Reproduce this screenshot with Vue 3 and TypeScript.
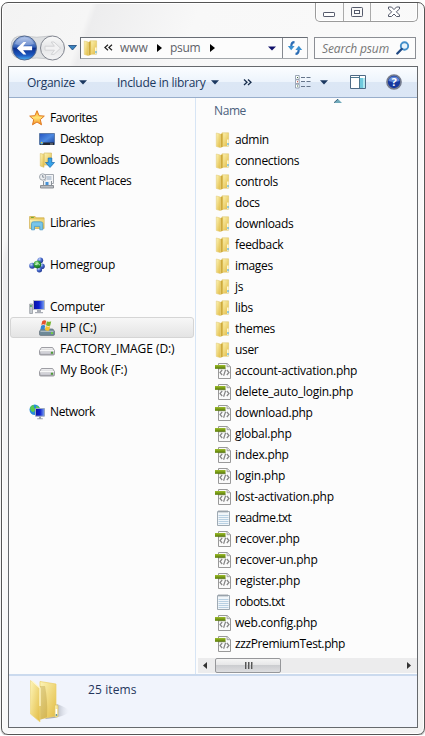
<script setup lang="ts">
interface NavItem {
  label: string
  icon: string
  level: number
  fit: 'tight' | 'normal' | 'loose'
  gap?: boolean
  selected?: boolean
}
interface FileItem {
  name: string
  icon: string
}

const navItems: NavItem[] = [
  { label: 'Favorites', icon: 'star', level: 0, fit: 'tight' },
  { label: 'Desktop', icon: 'desktop', level: 1, fit: 'tight' },
  { label: 'Downloads', icon: 'downloads', level: 1, fit: 'tight' },
  { label: 'Recent Places', icon: 'recent', level: 1, fit: 'tight' },
  { label: 'Libraries', icon: 'libraries', level: 0, fit: 'tight', gap: true },
  { label: 'Homegroup', icon: 'homegroup', level: 0, fit: 'normal', gap: true },
  { label: 'Computer', icon: 'computer', level: 0, fit: 'normal', gap: true },
  { label: 'HP (C:)', icon: 'system-drive', level: 1, fit: 'loose', selected: true },
  { label: 'FACTORY_IMAGE (D:)', icon: 'drive', level: 1, fit: 'loose' },
  { label: 'My Book (F:)', icon: 'drive', level: 1, fit: 'loose' },
  { label: 'Network', icon: 'network', level: 0, fit: 'tight', gap: true },
]

const names: string[] = [
  'admin', 'connections', 'controls', 'docs', 'downloads', 'feedback', 'images', 'js', 'libs', 'themes', 'user',
  'account-activation.php', 'delete_auto_login.php', 'download.php', 'global.php', 'index.php', 'login.php',
  'lost-activation.php', 'readme.txt', 'recover.php', 'recover-un.php', 'register.php', 'robots.txt',
  'web.config.php', 'zzzPremiumTest.php',
]
const files: FileItem[] = names.map((name) => ({
  name,
  icon: name.endsWith('.php') ? 'php' : name.endsWith('.txt') ? 'txt' : 'folder',
}))
</script>

<template>
  <svg class="defs" width="0" height="0" aria-hidden="true">
    <defs>
      <linearGradient id="g-yellow" x1="0" x2="1" y1="0" y2="1">
        <stop offset="0" stop-color="#fdf5b8" /><stop offset="1" stop-color="#e2bb42" />
      </linearGradient>
      <linearGradient id="g-fold" x1="0" x2="1" y1="0" y2="0">
        <stop offset="0" stop-color="#e8cd6b" /><stop offset=".5" stop-color="#c9a435" /><stop offset="1" stop-color="#e8cd6b" />
      </linearGradient>
      <linearGradient id="g-star" x1="0" x2="0" y1="0" y2="1">
        <stop offset="0" stop-color="#ffa51c" /><stop offset=".5" stop-color="#ffe477" /><stop offset="1" stop-color="#f58c1b" />
      </linearGradient>
      <linearGradient id="g-screen" x1="0" x2="1" y1="0" y2="1">
        <stop offset="0" stop-color="#2555c2" /><stop offset=".5" stop-color="#4d89e0" /><stop offset="1" stop-color="#173f9b" />
      </linearGradient>
      <linearGradient id="g-monitor" x1="0" x2="1" y1="0" y2="0">
        <stop offset="0" stop-color="#0a12a0" /><stop offset=".5" stop-color="#0d20d0" /><stop offset="1" stop-color="#7fa8f0" />
      </linearGradient>
      <linearGradient id="g-metal" x1="0" x2="0" y1="0" y2="1">
        <stop offset="0" stop-color="#f7f7f8" /><stop offset="1" stop-color="#a7a7ad" />
      </linearGradient>
      <radialGradient id="g-ball" cx=".35" cy=".3" r=".75">
        <stop offset="0" stop-color="#c7d8fa" /><stop offset=".5" stop-color="#4467c9" /><stop offset="1" stop-color="#21368f" />
      </radialGradient>
      <radialGradient id="g-green" cx=".4" cy=".3" r=".7">
        <stop offset="0" stop-color="#b9efae" /><stop offset=".5" stop-color="#2f9f37" /><stop offset="1" stop-color="#16651f" />
      </radialGradient>
      <linearGradient id="g-back" x1="0" x2="0" y1="0" y2="1">
        <stop offset="0" stop-color="#a9bfe8" /><stop offset=".45" stop-color="#3461b9" /><stop offset=".52" stop-color="#0d3190" /><stop offset=".8" stop-color="#1c58c0" /><stop offset="1" stop-color="#4bb3f2" />
      </linearGradient>
      <linearGradient id="g-next" x1="0" x2="0" y1="0" y2="1">
        <stop offset="0" stop-color="#fafafa" /><stop offset=".5" stop-color="#e4e5e7" /><stop offset="1" stop-color="#f5f5f6" />
      </linearGradient>
      <linearGradient id="g-tag" x1="0" x2="0" y1="0" y2="1">
        <stop offset="0" stop-color="#9cbc2c" /><stop offset="1" stop-color="#587b04" />
      </linearGradient>

      <symbol id="folder" viewBox="0 0 16 16">
        <path d="M7 .8h6.6v13.4H7z" fill="url(#g-yellow)" stroke="#ddc56b" stroke-width=".6" />
        <path d="M1.3 1 5.2 2v13.6l-3.9-1.2z" fill="url(#g-yellow)" stroke="#e4cd79" stroke-width=".6" />
        <path d="M5.2 2 8.2 1.2v13.5l-3 1.1z" fill="url(#g-fold)" />
        <path d="M12 7.5h1.6V14H12z" fill="#fff8d7" /><path d="M12.4 11h1.2v2.2h-1.2z" fill="#55aee3" />
      </symbol>
      <symbol id="star" viewBox="0 0 16 16">
        <path d="m8 .7 2.1 5 5.2.4-4 3.5 1.2 5.2L8 12l-4.5 2.8 1.2-5.2-4-3.5 5.2-.4z" fill="url(#g-star)" stroke="#e07a24" />
      </symbol>
      <symbol id="desktop" viewBox="0 0 16 16">
        <path d="M.5 2.5h15v11H.5z" fill="url(#g-screen)" stroke="#5f7ca8" />
        <path d="M1 11.5h14V14H1z" fill="#23272f" /><circle cx="2.7" cy="12" r="1.6" fill="#50a8e8" />
        <path d="M2 11h1.3v1.2H2z" fill="#f2c12c" /><path d="M11 12.5h3v1h-3z" fill="#88919d" />
      </symbol>
      <symbol id="downloads" viewBox="0 0 16 16">
        <path d="M5 1h7.5v12H5z" fill="url(#g-yellow)" stroke="#ceb45b" stroke-width=".6" />
        <path d="M1.3 1.5 5 2.3v13L1.3 14z" fill="url(#g-yellow)" stroke="#d8bd62" stroke-width=".6" />
        <path d="M9.2 6h3.6v4.5h2.7L11 15.5l-4.5-5h2.7z" fill="#36a2e9" stroke="#1769ad" stroke-width=".7" />
      </symbol>
      <symbol id="recent" viewBox="0 0 16 16">
        <path d="M6 1.5h8.5v9H6z" fill="#f4f5f7" stroke="#a4a9b0" />
        <path d="M7.5 4h5M7.5 6h5" stroke="#91a6bd" /><path d="M4.5 8v4.5h8V8" fill="#eef1f4" stroke="#8b9299" /><path d="M6.5 9h3v3h-3z" fill="#4591d6" />
        <path d="M1.5 12.5h13v2.5h-13z" fill="#b9bdc2" stroke="#8b8f95" />
        <circle cx="3.7" cy="4" r="3.2" fill="#eceef0" stroke="#a2a8af" /><path d="M3.7 2v2.2h1.6" fill="none" stroke="#6c7785" stroke-width=".8" />
      </symbol>
      <symbol id="libraries" viewBox="0 0 16 16">
        <path d="M.6 1.5h5.5l1 1.3h8v10.7H.6z" fill="#e9c960" stroke="#cfad4d" stroke-width=".7" />
        <path d="M1 4.5h14v8.3H1z" fill="url(#g-yellow)" /><path d="M2 2.4h2.8" stroke="#6ba52d" />
        <path d="M2.5 14.8V8.5q0-1.7 2-1.7h7q2.3 0 2.3 1.7v6.3h-3v-3.4H5.5v3.4z" fill="#78c6ea" stroke="#4d9bc4" stroke-width=".8" />
      </symbol>
      <symbol id="homegroup" viewBox="0 0 16 16">
        <circle cx="11.3" cy="3.3" r="2.9" fill="url(#g-ball)" /><circle cx="3.2" cy="8.7" r="3" fill="url(#g-ball)" />
        <circle cx="13" cy="9.2" r="2.8" fill="url(#g-ball)" /><circle cx="10.4" cy="12.8" r="2.7" fill="url(#g-ball)" />
        <circle cx="8.4" cy="7.6" r="3.8" fill="url(#g-green)" /><path d="M5.8 7.5h2.4V5.7L11 8.2" fill="none" stroke="#c9f2c5" stroke-width=".8" />
      </symbol>
      <symbol id="computer" viewBox="0 0 16 16">
        <path d="M4.5 1.5h11v9h-11z" fill="url(#g-monitor)" stroke="#b6bac2" />
        <path d="M8 11h4v2H8zM6 13h8v1.3H6z" fill="#a9adb5" />
        <path d="M.7 5h2.8v9.5H.7z" fill="#c6cbd1" stroke="#898f97" stroke-width=".7" /><path d="M1.2 6h1.5v2H1.2z" fill="#45a04b" />
      </symbol>
      <symbol id="drive" viewBox="0 0 16 16">
        <path d="M2.4 6.5h11.2l1.9 3.2v3.1q0 1.2-1.2 1.2H1.7Q.5 14 .5 12.8V9.7z" fill="url(#g-metal)" stroke="#93939a" stroke-width=".9" />
        <path d="M1 9.7h14" stroke="#fff" /><path d="M2 11.2h9v1.4H2z" fill="#d6d6dd" /><path d="M12 10.8h2v2h-2z" fill="#4c9b37" />
      </symbol>
      <symbol id="system-drive" viewBox="0 0 16 16">
        <path d="M2.2 9h11.6l1.7 2.3v2.9q0 1.2-1.2 1.2H1.7q-1.2 0-1.2-1.2v-2.9z" fill="#6d8998" stroke="#6c7780" stroke-width=".8" />
        <path d="M1.5 11.3h13" stroke="#b8c6ce" /><path d="M12 12.3h2v1.7h-2z" fill="#70d23e" />
        <path d="M3.2 1.2q2-1.7 4-.4l-.9 4.1q-2-1.3-4 .1z" fill="#e4512b" /><path d="M7.9 1.3q2 1.1 4.3 0l-.9 4.1q-2.2 1.1-4.3-.1z" fill="#78b531" />
        <path d="M2.2 5.7q2-1.4 4-.1l-.8 4.1q-2-1.3-4.1.1z" fill="#3484d1" /><path d="M6.8 6q2.2 1.2 4.3.2l-.8 4q-2.2 1.1-4.3-.1z" fill="#f6c22e" />
      </symbol>
      <symbol id="network" viewBox="0 0 16 16">
        <circle cx="5.8" cy="5.8" r="5.3" fill="#278bda" /><path d="M1 4q1-3 4.2-3l-.5 2.3 2 2-2.2 3L2 7zM7 1.4l3.5 2-1.5 2-2-1z" fill="#5acb4c" />
        <path d="M6.5 4.5h9v7.7h-9z" fill="url(#g-monitor)" stroke="#9ba9bf" /><path d="M10 12.5h2v2h-2zM8.2 14.3h5.6v1H8.2z" fill="#9ba2ac" />
      </symbol>
      <symbol id="php" viewBox="0 0 16 16">
        <path d="M3.5.5h8.8l3.2 3.2v11.8h-12z" fill="#fafafa" stroke="#999" /><path d="M12 .5v3.2h3.5" fill="#ddd" stroke="#999" stroke-width=".8" />
        <path d="M7.2 7 5 9.5 7.2 12M11.8 7l2.2 2.5-2.2 2.5M10.6 6.8l-2 6" fill="none" stroke="#858585" stroke-width="1.2" />
        <path d="M0 2h10.5v3.8H0z" fill="url(#g-tag)" /><path d="M3.5 5.8h7" stroke="#5c6c35" stroke-width=".6" />
      </symbol>
      <symbol id="txt" viewBox="0 0 16 16">
        <path d="M2.5 1.5h12v14h-12z" fill="#f1f6fa" stroke="#9faab3" /><path d="M3.5 5.5h10M3.5 7.5h10M3.5 9.5h10M3.5 11.5h10M3.5 13.5h10" stroke="#b8d0e2" />
        <path d="M4 0v2.8M6 0v2.8M8 0v2.8M10 0v2.8M12 0v2.8" stroke="#8f979e" stroke-width=".8" />
      </symbol>
    </defs>
  </svg>

  <main class="window">
    <header class="caption">
      <div class="window-buttons">
        <span class="minimize"><svg width="13" height="6"><rect x=".5" y=".5" width="11" height="4" rx=".6" fill="#fff" stroke="#555a6b" /></svg></span>
        <span class="maximize"><svg width="13" height="12"><rect x=".5" y="1.5" width="11" height="9" rx=".8" fill="#f8f8f8" stroke="#555a6b" /><rect x="3.5" y="4.5" width="5" height="3" fill="#fff" stroke="#555a6b" /></svg></span>
        <span class="close"><svg width="14" height="12"><path d="M1.5 1h3L7 3.6 9.5 1h3v2L9.3 5.8 12.5 9v1.5h-3L7 8l-2.5 2.5h-3V9l3.2-3.2L1.5 3z" fill="#fff" stroke="#555a6b" /></svg></span>
      </div>
    </header>

    <nav class="navigation">
      <svg class="travel" width="70" height="28" viewBox="0 0 70 28">
        <path d="M13 2q14 2.5 27 0 9 0 12 10-3 10-12 13-13-2-27 0Q1 25 1 13T13 2" fill="#dddfe1" stroke="#b7babe" stroke-width=".7" />
        <circle cx="14.5" cy="14" r="12" fill="url(#g-back)" stroke="#52688e" /><path d="M4.8 10Q7.5 3.5 14.5 3.5T24 10q-10 3-19.2 0" fill="#fff" opacity=".25" />
        <path d="M6.8 14.2 13.5 8h2.8l-3.2 4.2h9v4h-9l3.2 4.2h-2.8z" fill="#fff" />
        <circle cx="42.5" cy="14" r="12" fill="url(#g-next)" stroke="#81858f" /><path d="M50.5 14.2 44 8h-2.8l3.2 4.2H35v4h9.4l-3.2 4.2H44z" fill="#f2f2f3" stroke="#d2d3d5" />
        <path d="M58.5 11.5h8l-4 4.5z" fill="#3982be" stroke="#1c487b" stroke-width=".8" />
      </svg>
      <div class="address">
        <svg class="folder-icon" width="16" height="16"><use href="#folder" /></svg>
        <span class="chevrons">
          <svg width="9" height="8"><path d="M4 .8.9 3.5 4 6.3M8 .8 4.9 3.5 8 6.3" fill="none" stroke="#222" stroke-width="1.2" /></svg>
        </span>
        <span class="crumb crumb-www">www</span>
        <svg class="crumb-arrow" width="5" height="8"><path d="M0 0l5 4-5 4z" fill="#000" /></svg>
        <span class="crumb crumb-psum">psum</span>
        <svg class="crumb-arrow last" width="5" height="8"><path d="M0 0l5 4-5 4z" fill="#000" /></svg>
        <svg class="history" width="8" height="5"><path d="M0 .5h8L4 4.6z" fill="#10106a" /></svg>
        <span class="refresh">
          <svg width="16" height="16" viewBox="0 0 16 16"><path d="M7.5 2.2Q4.3 2.2 4.3 6.5" fill="none" stroke="#2c6db5" stroke-width="2.2" /><path d="M.8 6h6.8l-3.4 4.2z" fill="#3a8fd0" /><path d="M8.5 13.8q3.2 0 3.2-4.3" fill="none" stroke="#2c6db5" stroke-width="2.2" /><path d="M8.4 10h6.8l-3.4-4.2z" fill="#3a8fd0" /></svg>
        </span>
      </div>
      <div class="search">
        <span>Search psum</span>
        <svg width="14" height="14" viewBox="0 0 14 14"><circle cx="8.5" cy="5" r="3.7" fill="#e8f4fc" stroke="#438fca" stroke-width="1.9" /><path d="m5.7 8-4.4 4.5" stroke="#214983" stroke-width="2.3" stroke-linecap="round" /></svg>
      </div>
    </nav>

    <section class="client">
      <div class="toolbar">
        <span class="organize">Organize</span>
        <svg class="organize-arrow" width="8" height="5"><path d="M0 .3h8L4 4.5z" fill="#1b3860" /></svg>
        <span class="include">Include in library</span>
        <svg class="include-arrow" width="8" height="5"><path d="M0 .3h8L4 4.5z" fill="#1b3860" /></svg>
        <svg class="more" width="9" height="7"><path d="M1 .5 4 3.2 1 6M5 .5 8 3.2 5 6" fill="none" stroke="#182d4c" stroke-width="1.3" /></svg>
        <svg class="view" width="16" height="14" viewBox="0 0 16 14">
          <path d="M.5.5h3.7v3.8H.5zM.5 4.8h3.7v3.8H.5zM.5 9.2h3.7V13H.5z" fill="#fff" stroke="#8492a5" stroke-width=".8" />
          <path d="M2 2h1v1H2zM2 10.6h1v1H2z" fill="#3c6c3e" /><path d="M2 6.3h1v1H2z" fill="#c63a2f" />
          <path d="M6 2.5h4m1.5 0h4M6 6.5h4m1.5 0h4M6 11.5h4m1.5 0h4" stroke="#65758b" />
        </svg>
        <svg class="view-arrow" width="8" height="5"><path d="M0 .3h8L4 4.5z" fill="#1b3860" /></svg>
        <svg class="preview" width="16" height="14"><path d="M.5.5h15v13H.5z" fill="#fff" stroke="#4d6985" /><path d="M10 3h5v10h-5z" fill="#70c9dd" /><path d="M1 2.5h9M9.5 1v12" stroke="#4d7891" /><path d="M13 3h2v10h-2z" fill="#aee8ef" /></svg>
        <svg class="help" width="16" height="16"><circle cx="8" cy="8" r="7" fill="#17389f" stroke="#747b8d" stroke-width="1.7" /><path d="M2.5 7Q3 2.5 8 2.5T13.5 7Q8 9 2.5 7" fill="#5f87d6" /><text x="8" y="12" text-anchor="middle">?</text></svg>
      </div>

      <div class="workspace">
        <aside class="sidebar">
          <div v-for="item in navItems" :key="item.label" class="nav-row" :class="[item.fit, { child: item.level === 1, gap: item.gap, selected: item.selected }]">
            <svg width="16" height="16"><use :href="'#' + item.icon" /></svg>
            <span>{{ item.label }}</span>
          </div>
        </aside>
        <section class="file-pane">
          <div class="column-head">
            <span>Name</span>
            <svg class="sort" width="8" height="4"><path d="M0 4l4-4 4 4z" fill="#70a9ba" /><path d="M0 3.7 4 0" stroke="#38617a" /></svg>
          </div>
          <div class="files">
            <div v-for="file in files" :key="file.name" class="file-row" :class="file.icon">
              <svg width="16" height="16"><use :href="'#' + file.icon" /></svg>
              <span>{{ file.name }}</span>
            </div>
          </div>
          <div class="scrollbar">
            <svg width="4" height="8"><path d="M4 0v7L0 3.5z" fill="#333" /></svg>
            <div class="thumb"><i /><i /><i /></div>
            <svg class="scroll-right" width="4" height="8"><path d="M0 0v7l4-3.5z" fill="#333" /></svg>
          </div>
        </section>
      </div>

      <footer class="details">
        <svg width="49" height="44" viewBox="0 0 49 44">
          <defs><linearGradient id="g-shadow" x1="0" x2="1" y1="0" y2="0"><stop offset=".4" stop-color="#8d92a0" /><stop offset="1" stop-color="#d5d9e4" stop-opacity="0" /></linearGradient></defs>
          <path d="M16 40q8 0 17-3 8-3 7-5-1-3-12-7z" fill="url(#g-shadow)" opacity=".75" />
          <path d="M11 2.5 27 5v32l-16 3z" fill="url(#g-yellow)" stroke="#eccf66" stroke-width=".7" />
          <path d="M11 7h5q3 16 2 31l-7 3z" fill="#9e7e23" opacity=".28" />
          <path d="m1.5 1.5 9.5 8V43l-9.5-8z" fill="url(#g-yellow)" stroke="#eed883" stroke-width=".7" />
          <path d="m3 2 8 7v18" fill="none" stroke="#fff7cc" stroke-width="1.3" /><rect x="25.5" y="26" width="3.5" height="12" rx="1" fill="#f8e89d" stroke="#d8ba54" stroke-width=".6" /><path d="M26.7 30h1.5v6h-1.5z" fill="#fff" /><path d="M26.7 35h1.5v2h-1.5z" fill="#6898a1" />
        </svg>
        <span>25 items</span>
      </footer>
    </section>
  </main>
</template>

<style>
body {
  margin: 0;
  overflow: hidden;
  background: #fff;
}
</style>

<style scoped>
* { box-sizing: border-box; }
svg { display: block; flex: none; }
.defs { position: absolute; }
.window {
  width: 424px;
  height: 733px;
  margin: 2px 0 0 1px;
  border: 1px solid #555;
  border-radius: 7px;
  padding: 0 6px;
  background: linear-gradient(110deg, #f3f3f3 0, #f6f6f6 13%, #ededee 14%, #f8f8f8 29%, #fafafa 70%, #f2f2f2 100%);
  box-shadow: inset 0 0 0 1px #fff, 0 1px 1px #999;
  font-family: 'Open Sans', 'Noto Sans', sans-serif;
  font-size: 12px;
  line-height: 21px;
  color: #000;
  white-space: nowrap;
}
.caption { display: flex; height: 31px; justify-content: flex-end; }
.window-buttons { display: flex; width: 103px; height: 19px; border: 1px solid #9b9b9b; border-top: 0; border-radius: 0 0 5px 5px; box-shadow: inset 0 0 0 1px #fff; }
.window-buttons span { display: flex; align-items: center; justify-content: center; width: 27px; border-right: 1px solid #aaa; }
.window-buttons .minimize { padding-top: 5px; width: 28px; }
.window-buttons .close { flex: 1; border: 0; }
.navigation { display: flex; height: 32px; padding-top: 3px; }
.travel { width: 70px; margin: -3px 0 0 2px; }
.address { display: flex; align-items: center; width: 228px; height: 22px; border: 1px solid #777c82; border-color: #686d75 #a3a7ab #a3a7ab #686d75; background: #fcfcfc; color: #5e6269; }
.folder-icon { margin-left: 2px; }
.chevrons { width: 9px; margin-left: 5px; }
.crumb { line-height: 20px; }
.crumb-www { width: 27px; margin-left: 7px; }
.crumb-arrow { margin-left: 10px; }
.crumb-psum { width: 30px; margin-left: 8px; letter-spacing: -.3px; }
.history { margin-left: auto; margin-right: 6px; }
.refresh { display: flex; width: 25px; height: 20px; align-items: center; justify-content: center; border-left: 1px solid #858990; }
.search { display: flex; align-items: center; justify-content: space-between; width: 102px; height: 22px; margin-left: 6px; padding: 0 5px 0 7px; border: 1px solid #8b8e94; background: #fcfcfc; color: #777; font-style: italic; }
.search span { letter-spacing: -.14px; }
.client { display: flex; flex-direction: column; width: 410px; height: 662px; border: 1px solid #66696d; background: #fcfcfc; }
.toolbar { display: flex; align-items: center; height: 31px; padding-left: 18px; border-bottom: 1px solid #98aecb; background: linear-gradient(#fbfdff 0, #edf4fc 49%, #dce7f5 50%, #dbe6f5 100%); color: #1b3860; }
.toolbar span { letter-spacing: -.28px; }
.organize { width: 48px; }
.organize-arrow { margin-left: 4px; }
.include { width: 88px; margin-left: 30px; }
.include-arrow { margin-left: 6px; }
.more { margin-left: 24px; }
.view { margin-left: 43px; }
.view-arrow { margin-left: 9px; }
.preview { margin-left: 22px; }
.help { margin-left: 20px; }
.help text { fill: #fff; font: bold 11px 'Open Sans', sans-serif; }
.workspace { display: flex; height: 576px; }
.sidebar { width: 187px; padding-top: 9px; border-right: 1px solid #d7e5f5; }
.nav-row { display: flex; align-items: center; gap: 5px; height: 21px; margin: 0 1px; padding-left: 19px; }
.tight { letter-spacing: -.4px; }
.normal { letter-spacing: -.24px; }
.loose { letter-spacing: -.07px; }
.nav-row.child { padding-left: 29px; }
.nav-row.gap { margin-top: 21px; }
.nav-row.selected { border: 1px solid #d5d5d5; border-radius: 3px; padding-left: 28px; background: linear-gradient(#f7f7f7, #e4e4e4); }
.nav-row span { margin-top: -1px; }
.file-pane { display: flex; flex: 1; flex-direction: column; }
.column-head { display: flex; height: 31px; padding: 2px 0 0 18px; color: #4b607d; }
.column-head span { width: 32px; letter-spacing: -.4px; }
.sort { margin: -1px 0 0 88px; }
.files { height: 529px; }
.file-row { display: flex; align-items: center; gap: 4px; height: 21px; padding-left: 19px; }
.file-row span { margin-top: -1px; }
.folder { letter-spacing: -.32px; }
.php { letter-spacing: -.25px; }
.txt { letter-spacing: -.52px; }
.php:last-child { letter-spacing: -.38px; }
.scrollbar { display: flex; align-items: center; height: 15px; margin-left: 2px; padding: 0 6px 0 5px; background: #ececed; }
.thumb { display: flex; align-items: center; justify-content: center; gap: 2px; width: 66px; height: 15px; margin-left: 8px; border: 1px solid #96979a; border-radius: 2px; background: linear-gradient(#f5f5f5 0, #e6e6e7 48%, #cccdd0 50%, #dedee0); }
.thumb i { width: 1px; height: 7px; background: #565656; box-shadow: 1px 0 #a3a3a3; }
.scroll-right { margin-left: auto; }
.details { display: flex; flex: 1; padding: 3px 0 0 20px; border-top: 2px solid #cbdaee; background: #f1f4fc; color: #25365c; }
.details span { margin-left: 10px; letter-spacing: .1px; }
</style>
